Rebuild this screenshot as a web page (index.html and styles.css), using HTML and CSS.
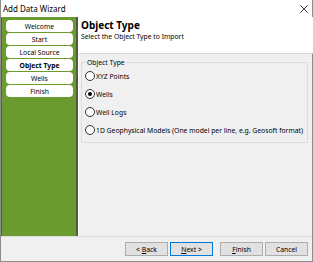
FILE: index.html
```html
<!DOCTYPE html>
<html lang="en">
<head>
  <meta charset="UTF-8">
  <title>Add Data Wizard</title>
  <link rel="stylesheet" href="styles.css">
</head>
<body>
  <div class="window">
    <div class="titlebar">
      <span class="title">Add Data Wizard</span>
      <svg class="close" width="8" height="8" viewBox="0 0 8 8">
        <path d="M0.5 0.5 L7.5 7.5 M7.5 0.5 L0.5 7.5" stroke="#222" stroke-width="0.9" fill="none" />
      </svg>
    </div>
    <div class="content">
      <div class="sidebar">
        <div class="step">Welcome</div>
        <div class="step">Start</div>
        <div class="step">Local Source</div>
        <div class="step active">Object Type</div>
        <div class="step">Wells</div>
        <div class="step">Finish</div>
      </div>
      <div class="main">
        <div class="header">
          <h1>Object Type</h1>
          <p>Select the Object Type to Import</p>
        </div>
        <div class="page">
          <fieldset class="group">
            <legend>Object Type</legend>
            <label class="option"><span class="radio"></span>XYZ Points</label>
            <label class="option"><span class="radio checked"></span>Wells</label>
            <label class="option"><span class="radio"></span>Well Logs</label>
            <label class="option"><span class="radio"></span>1D Geophysical Models (One model per line, e.g. Geosoft format)</label>
          </fieldset>
        </div>
      </div>
    </div>
    <div class="footer">
      <button>&lt; <u>B</u>ack</button>
      <button class="default"><u>N</u>ext &gt;</button>
      <button class="gap"><u>F</u>inish</button>
      <button>Cancel</button>
    </div>
  </div>
</body>
</html>
```

FILE: styles.css
```css
body, html {
  margin: 0;
  padding: 0;
  background: #ffffff;
}

.window {
  width: 313px;
  height: 262px;
  box-sizing: border-box;
  border: 1px solid #8c8c8c;
  border-top: none;
  display: flex;
  flex-direction: column;
  font-family: "Noto Sans", sans-serif;
  font-size: 6.8px;
  color: #000;
  background: #f0f0f0;
}

.titlebar {
  height: 17px;
  flex: none;
  background: #fff;
  display: flex;
  align-items: center;
  justify-content: space-between;
  padding: 0 4px 0 2px;
}

.title {
  font-size: 8px;
}

.content {
  flex: 1;
  display: flex;
}

.sidebar {
  flex: none;
  width: 77px;
  box-sizing: border-box;
  background: #6b9a30;
  border-left: 1px solid #55663f;
  border-right: 2px solid #4f5c40;
  box-shadow: 1px 0 0 #ffffff;
  padding: 3px 3px 0 4px;
  display: flex;
  flex-direction: column;
  gap: 1px;
}

.step {
  height: 12px;
  background: #fff;
  border-radius: 4px;
  display: flex;
  align-items: center;
  justify-content: center;
}

.step.active {
  font-weight: bold;
}

.main {
  flex: 1;
  display: flex;
  flex-direction: column;
  margin-left: 1px;
}

.header {
  height: 37px;
  background: #fff;
  border-bottom: 1px solid #d5d5d5;
  padding: 2px 0 0 2px;
  box-sizing: border-box;
}

.header h1 {
  margin: 0;
  font-size: 10px;
  line-height: 13px;
}

.header p {
  margin: 0;
  line-height: 9px;
}

.page {
  padding: 4px 5px 0 2px;
}

.group {
  margin: 0;
  border: 1px solid #dcdcdc;
  padding: 4px 4px 7px 3px;
  display: flex;
  flex-direction: column;
  gap: 8px;
}

.group legend {
  padding: 0 1px;
  margin-left: 1px;
}

.option {
  display: flex;
  align-items: center;
  gap: 1px;
  height: 10px;
  white-space: nowrap;
}

.radio {
  flex: none;
  width: 8px;
  height: 8px;
  border: 1px solid #333;
  border-radius: 50%;
  background: #fff;
  display: flex;
  align-items: center;
  justify-content: center;
}

.radio.checked::after {
  content: "";
  width: 4px;
  height: 4px;
  border-radius: 50%;
  background: #000;
}

.footer {
  height: 24px;
  flex: none;
  border-top: 1px solid #dcdcdc;
  display: flex;
  align-items: center;
  justify-content: flex-end;
  gap: 2px;
  padding-right: 4px;
}

.footer button {
  width: 43px;
  height: 14px;
  padding: 0;
  font-family: inherit;
  font-size: 6.8px;
  background: #e1e1e1;
  border: 1px solid #adadad;
}

.footer button.default {
  border: 1px solid #0078d7;
}

.footer button.gap {
  margin-left: 5px;
}
```
